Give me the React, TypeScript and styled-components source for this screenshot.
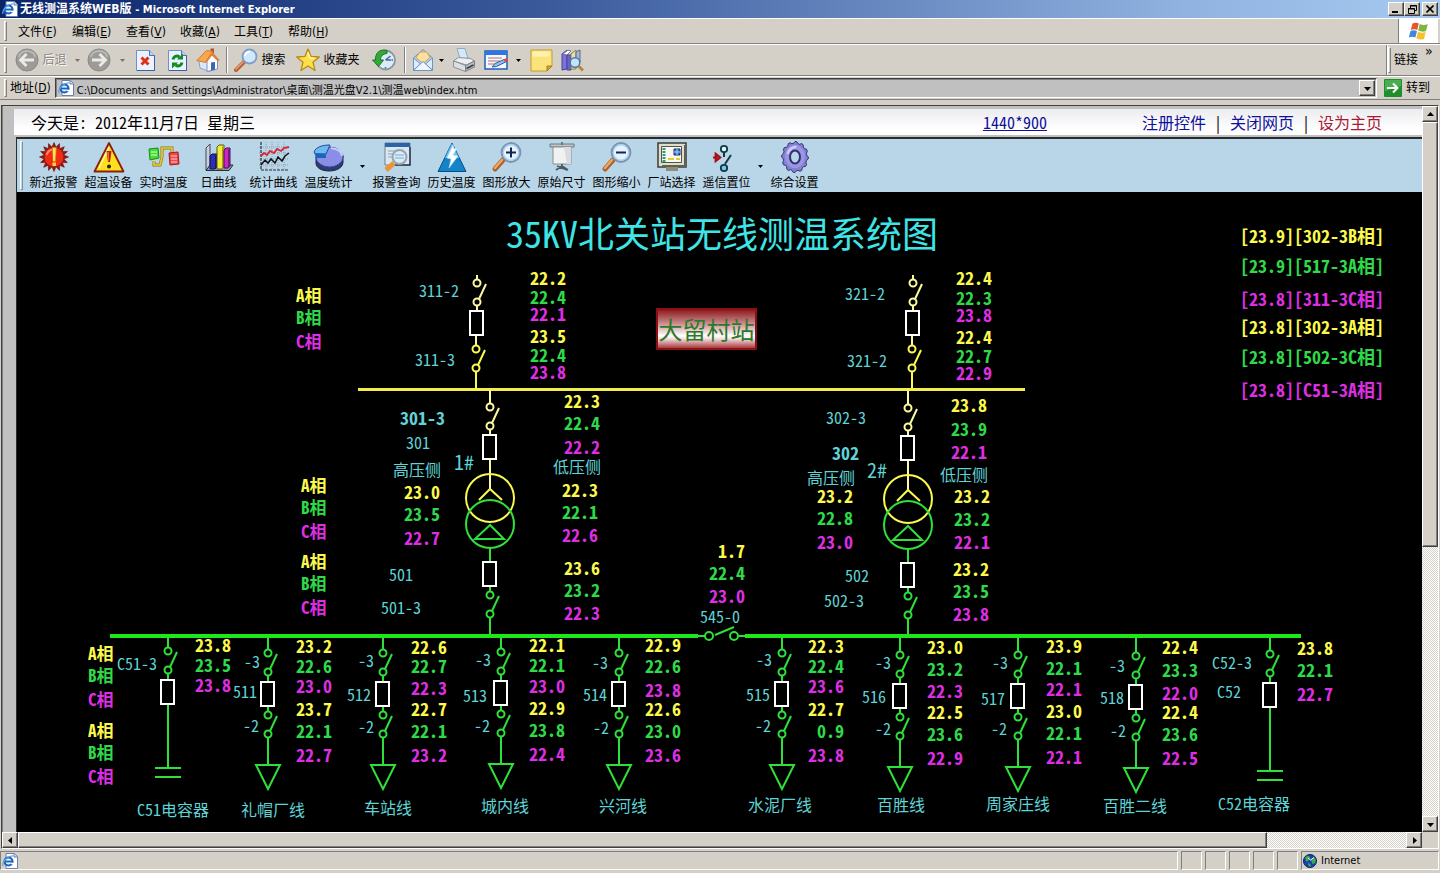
import React from "react";
import styled, { createGlobalStyle, css } from "styled-components";

const GlobalStyle = createGlobalStyle`
  * { box-sizing: border-box; }
  html, body { margin: 0; padding: 0; }
  body { background: #d4d0c8; overflow: hidden; }
  button, input { font: inherit; color: inherit; margin: 0; padding: 0; border: 0; background: none; }
  svg { display: block; flex: none; }
`;

const uiFont = `"DejaVu Sans Condensed", "Noto Sans CJK SC", sans-serif`;
const songFont = `"Noto Sans CJK SC", sans-serif`;

const YELLOW = "#fbf84e";
const GREEN = "#2fd94a";
const MAGENTA = "#dd2fe0";
const CYAN = "#5fd3d6";
const PHASE_COLORS = [YELLOW, GREEN, MAGENTA];

/* ---------- window chrome ---------- */

const Window = styled.div`
  height: 100vh;
  display: flex;
  flex-direction: column;
  background: #d4d0c8;
  font-family: ${uiFont};
  font-size: 12px;
  line-height: 16px;
  color: #000;
`;

const TitleBar = styled.header`
  height: 18px;
  display: flex;
  align-items: center;
  gap: 2px;
  padding: 0 2px 0 2px;
  background: linear-gradient(to right, #0a246a, #3a5a9c 38%, #8fb2e0 82%, #a6caf0);
`;

const WindowTitle = styled.h1`
  flex: 1;
  margin: 0;
  font-size: 12px;
  line-height: 16px;
  font-weight: 700;
  color: #fff;
  white-space: nowrap;
`;

const ProductName = styled.span`
  font-size: 11px;
`;

const raised = css`
  background: #d4d0c8;
  border: 1px solid;
  border-color: #fff #404040 #404040 #fff;
  box-shadow: inset -1px -1px 0 #808080;
`;

const CaptionButton = styled.button<{ $apart?: boolean }>`
  ${raised}
  width: 16px;
  height: 14px;
  margin-left: ${(p) => (p.$apart ? 0 : -2)}px;
  display: flex;
  align-items: center;
  justify-content: center;
`;

const Band = styled.div<{ $h: number }>`
  height: ${(p) => p.$h}px;
  display: flex;
  align-items: center;
  border-top: 1px solid #fff;
  border-bottom: 1px solid #808080;
  padding-left: 4px;
`;

const Grip = styled.span`
  width: 3px;
  align-self: stretch;
  margin: 2px 0;
  border: 1px solid;
  border-color: #fff #808080 #808080 #fff;
`;

const MenuList = styled.nav`
  flex: 1;
  display: flex;
  align-items: center;
  padding-left: 11px;
  padding-top: 2px;
  gap: 14px;
`;

const MenuItem = styled.button`
  width: 40px;
  text-align: left;
  white-space: nowrap;
  font-size: 12px;
  line-height: 16px;
  u { text-underline-offset: 1px; }
`;

const LogoBox = styled.div`
  width: 40px;
  align-self: stretch;
  display: flex;
  align-items: center;
  justify-content: center;
  background: #fff;
  border-left: 1px solid #808080;
  margin-right: 2px;
`;

const ToolRow = styled.div`
  flex: 1;
  display: flex;
  align-items: center;
  padding-left: 4px;
`;

const ToolButton = styled.button<{ $w: number; $muted?: boolean }>`
  width: ${(p) => p.$w}px;
  height: 28px;
  display: flex;
  align-items: center;
  justify-content: center;
  gap: 3px;
  white-space: nowrap;
  color: ${(p) => (p.$muted ? "#8a8780" : "#000")};
  text-shadow: ${(p) => (p.$muted ? "1px 1px 0 #fff" : "none")};
`;

const Divider = styled.span`
  width: 2px;
  height: 26px;
  margin: 0 3px;
  border-left: 1px solid #808080;
  border-right: 1px solid #fff;
`;

const LinksBand = styled.div`
  width: 54px;
  align-self: stretch;
  display: flex;
  gap: 3px;
  border-left: 1px solid #808080;
  box-shadow: inset 1px 0 0 #fff;
  padding-left: 1px;
  white-space: nowrap;
`;

const LinksLabel = styled.span`
  align-self: center;
`;

const Chevron = styled.span`
  padding-left: 4px;
  font-size: 14px;
  line-height: 12px;
`;

const AddressLabel = styled.label`
  padding: 0 4px 0 3px;
  white-space: nowrap;
`;

const AddressBox = styled.div`
  flex: 1;
  height: 20px;
  display: flex;
  align-items: center;
  background: #c0c0c0;
  border: 1px solid;
  border-color: #404040 #fff #fff #404040;
  box-shadow: inset 1px 1px 0 #808080;
  padding: 0 1px 0 2px;
`;

const AddressInput = styled.input`
  flex: 1;
  height: 18px;
  padding-left: 3px;
  padding-top: 2px;
  font-size: 11px;
  outline: none;
`;

const SquareButton = styled.button`
  ${raised}
  width: 16px;
  height: 16px;
  flex: none;
  display: flex;
  align-items: center;
  justify-content: center;
`;

const GoButton = styled.button`
  width: 63px;
  display: flex;
  align-items: center;
  gap: 4px;
  padding-left: 7px;
  white-space: nowrap;
`;

/* ---------- viewport and scroll bars ---------- */

const Viewport = styled.div`
  flex: 1;
  min-height: 0;
  margin: 5px 1px 0 1px;
  border: 1px solid;
  border-color: #404040 #fff #fff #404040;
  display: grid;
  grid-template-columns: minmax(0, 1fr) 16px;
  grid-template-rows: minmax(0, 1fr) 16px;
`;

const dither = css`
  background: repeating-conic-gradient(#fff 0 25%, #d4d0c8 0 50%) 0 0 / 2px 2px;
`;

const VTrack = styled.div`
  ${dither}
  display: flex;
  flex-direction: column;
`;

const HTrack = styled.div`
  ${dither}
  display: flex;
`;

const Thumb = styled.div<{ $share: number }>`
  ${raised}
  flex: ${(p) => p.$share} 1 0;
`;

const Rest = styled.div<{ $share: number }>`
  flex: ${(p) => p.$share} 1 0;
`;

const Page = styled.main`
  min-width: 0;
  display: flex;
  flex-direction: column;
  background: #c0c0c0;
  border-left: 1px solid #808080;
  overflow: hidden;
`;

/* ---------- page header ---------- */

const InfoBar = styled.div`
  height: 26px;
  flex: none;
  margin: 3px 0 2px 11px;
  display: flex;
  align-items: center;
  background: linear-gradient(#ececf0, #fff 80%);
  padding: 0 40px 0 17px;
  font-family: ${songFont};
  font-size: 16px;
  line-height: 20px;
  white-space: pre;
  font-feature-settings: "hwid";
`;

const Today = styled.span`
  flex: 1;
`;

const SizeLink = styled.a`
  color: #10109a;
  margin-right: 95px;
`;

const InfoLink = styled.a<{ $tone: string }>`
  color: ${(p) => p.$tone};
  text-decoration: none;
`;

const Main = styled.section`
  flex: 1;
  min-height: 0;
  display: flex;
  flex-direction: column;
  margin-left: 13px;
  border-top: 2px solid #2c2c2c;
  border-left: 1px solid #2c2c2c;
  background: #000;
`;

const ActionBar = styled.div`
  height: 53px;
  flex: none;
  display: flex;
  align-items: flex-start;
  background: #b9d5e8;
  padding: 2px 0 0 3px;
`;

const ActionGrip = styled.span`
  width: 3px;
  height: 49px;
  margin-right: 3px;
  border: 1px solid;
  border-color: #fff #8094a0 #8094a0 #fff;
`;

const ActionButton = styled.button`
  width: 55px;
  height: 49px;
  display: flex;
  flex-direction: column;
  align-items: center;
  font-family: ${songFont};
  font-size: 12px;
  line-height: 17px;
  white-space: nowrap;
`;

const DropButton = styled.button<{ $w: number; $tall?: boolean }>`
  width: ${(p) => p.$w}px;
  height: ${(p) => (p.$tall ? 50 : 28)}px;
  display: flex;
  align-items: center;
  justify-content: center;
`;

/* ---------- diagram ---------- */

const Canvas = styled.div`
  position: relative;
  flex: 1;
  min-height: 0;
  overflow: hidden;
  background: #000;
  font-family: ${songFont};
  font-feature-settings: "hwid";
`;

const Tag = styled.span<{ $size: number; $bold?: boolean; $color: string; $w?: number }>`
  position: absolute;
  font-size: ${(p) => p.$size}px;
  line-height: ${(p) => (p.$size > 30 ? 40 : 16)}px;
  font-weight: ${(p) => (p.$bold ? 700 : 400)};
  color: ${(p) => p.$color};
  width: ${(p) => (p.$w ? `${p.$w}px` : "auto")};
  text-align: ${(p) => (p.$w ? "right" : "left")};
  white-space: nowrap;
`;

const StationButton = styled.button`
  position: absolute;
  left: 639px;
  top: 116px;
  width: 101px;
  height: 42px;
  border: 2px solid #8e0f12;
  background: linear-gradient(#8e1c20, #c98a8c 35%, #fff 68%, #f2dcdc 76%, #a83a3e);
  color: #2b7a2b;
  font-family: ${songFont};
  font-size: 24px;
  line-height: 36px;
  white-space: nowrap;
`;

/* ---------- status bar ---------- */

const StatusBar = styled.footer`
  height: 24px;
  flex: none;
  display: flex;
  gap: 3px;
  margin-top: 1px;
  padding: 1px 1px 3px 0;
  border-bottom: 1px solid #fff;
`;

const StatusCell = styled.div<{ $w?: number }>`
  ${(p) => (p.$w ? `width: ${p.$w}px;` : "flex: 1;")}
  display: flex;
  align-items: center;
  gap: 4px;
  padding-left: 1px;
  border: 1px solid;
  border-color: #808080 #fff #fff #808080;
  font-size: 11px;
`;

/* ---------- small glyphs ---------- */

const Caret = ({ dir = "down", color = "#000" }: { dir?: "up" | "down" | "left" | "right"; color?: string }) => {
  const d = {
    down: "M0 2h7l-3.5 4z",
    up: "M0 5h7l-3.5-4z",
    left: "M5 0v7L1 3.5z",
    right: "M2 0v7l4-3.5z",
  }[dir];
  return (
    <svg width="7" height="7" viewBox="0 0 7 7" aria-hidden="true">
      <path d={d} fill={color} />
    </svg>
  );
};

const SmallCaret = ({ color = "#000" }: { color?: string }) => (
  <svg width="5" height="3" viewBox="0 0 5 3" aria-hidden="true">
    <path d="M0 0h5L2.500 3z" fill={color} />
  </svg>
);

const PageIcon = () => (
  <svg width="16" height="16" viewBox="0 0 16 16" aria-hidden="true">
    <path d="M4 .5h8.500L15.500 3.500v12H4z" fill="#fff" stroke="#6b7fa8" />
    <path d="M12 .5v3.500h3.500" fill="#cfe0f4" stroke="#6b7fa8" />
    <circle cx="6.500" cy="8.500" r="4" fill="#dff0ff" stroke="#1d62b8" strokeWidth="2.200" />
    <path d="M3 8.500h8" stroke="#1d62b8" strokeWidth="1.800" />
    <path d="M9 10.500h3" stroke="#fff" strokeWidth="1.500" />
    <path d="M1 13C-.5 9 6 2.500 11 3" fill="none" stroke="#5aa5ea" strokeWidth="1.200" />
  </svg>
);

const WindowsFlag = () => (
  <svg width="21" height="19" viewBox="0 0 21 19" aria-hidden="true">
    <path d="M4.500 1.500C7 .2 9 .5 10.800 1.500L9.200 8C7.300 7 5 7 2.800 8z" fill="#e8552a" />
    <path d="M11.800 2c2.500 1.200 5 1.200 8 .2L18 9c-2.700 1-5 .8-7.800-.5z" fill="#7cb83a" />
    <path d="M2.500 9C5 8 7 8.200 9 9.200L7.300 15.500C5 14.500 3 14.500.8 15.500z" fill="#3f86dc" />
    <path d="M10 9.700c2.500 1.200 5 1.400 7.700.4L16 17c-2.500 1-5 .6-7.700-.7z" fill="#f5c22d" />
  </svg>
);

const NavDisc = ({ flip }: { flip?: boolean }) => (
  <svg width="24" height="24" viewBox="0 0 24 24" aria-hidden="true">
    <circle cx="12" cy="12" r="11" fill="#9c9b98" stroke="#8a8986" />
    <path d="M3.500 9A9 9 0 0 1 20.500 9" fill="none" stroke="#b9b8b5" strokeWidth="2" />
    <path
      d={flip ? "M5 12h13M12.500 6l6 6-6 6" : "M19 12H6M11.500 6l-6 6 6 6"}
      fill="none"
      stroke="#eceae6"
      strokeWidth="2.800"
    />
  </svg>
);

const SheetBase = () => (
  <>
    <path d="M1.500 1.500h13l5 5v15h-18z" fill="#eaf3ff" stroke="#6f8fd0" />
    <path d="M14.500 1.500v5h5" fill="#b9d2f5" stroke="#4a6fc0" />
    <path d="M2 21.500h17.500v-15" fill="none" stroke="#3b5fae" />
  </>
);

const StopIcon = () => (
  <svg width="21" height="23" viewBox="0 0 21 23" aria-hidden="true">
    <SheetBase />
    <path d="M6.500 8.500l7 7M13.500 8.500l-7 7" stroke="#e0301a" strokeWidth="3" />
  </svg>
);

const RefreshIcon = () => (
  <svg width="21" height="23" viewBox="0 0 21 23" aria-hidden="true">
    <SheetBase />
    <path d="M6 10.500c.5-3 3.500-4.500 6.500-2.500" fill="none" stroke="#128a22" strokeWidth="3" />
    <path d="M10 10.500h6v-6z" fill="#128a22" />
    <path d="M15 13.500c-.5 3-3.500 4.500-6.500 2.500" fill="none" stroke="#128a22" strokeWidth="3" />
    <path d="M11 13.500H5v6z" fill="#128a22" />
  </svg>
);

const HomeIcon = () => (
  <svg width="24" height="24" viewBox="0 0 24 24" aria-hidden="true">
    <path d="M14.500 .5H18v7h-3.500z" fill="#b5532c" />
    <path d="M3 13l7-8 11 6v10l-8 2.500L4 20z" fill="#dbe8fb" stroke="#8aa0cc" />
    <path d="M11 12.500l5-6 5.500 5.500v9L11 23.500z" fill="#f7faff" stroke="#7a93c8" />
    <path d="M.8 12.500L10.500 2.500l6.500 1-7.500 11z" fill="#f6a850" stroke="#d87a2c" />
    <path d="M16 3.500l7.500 8.500-1.500 1.500-6-6-5.500 7-1.500-.5z" fill="#e08230" />
    <path d="M15 14.500l4-.5v7.500l-4 1z" fill="#3f63ae" />
  </svg>
);

const SearchIcon = () => (
  <svg width="24" height="24" viewBox="0 0 24 24" aria-hidden="true">
    <path d="M2 22l8-8" stroke="#b5623a" strokeWidth="4" strokeLinecap="round" />
    <path d="M2 21l7-7" stroke="#e6a27a" strokeWidth="1.500" strokeLinecap="round" />
    <circle cx="15.500" cy="8.500" r="7" fill="#cfe8fb" stroke="#7d9dc4" strokeWidth="1.800" />
    <path d="M11 8a5 5 0 0 1 5-4.500" fill="none" stroke="#fff" strokeWidth="2" />
  </svg>
);

const StarIcon = () => (
  <svg width="24" height="24" viewBox="0 0 24 24" aria-hidden="true">
    <path
      d="M12 1l3 7.300 8.300.7-6.300 5.300 2 8.200-7-4.500L5 22.500l2-8.200L.7 9l8.300-.7z"
      fill="#fbe04a"
      stroke="#b98a12"
      strokeWidth="1.300"
      strokeLinejoin="round"
    />
    <path d="M12 4.500l1.800 5.300 4.700.7" fill="none" stroke="#fff6b8" strokeWidth="1.500" />
  </svg>
);

const HistoryIcon = () => (
  <svg width="24" height="24" viewBox="0 0 24 24" aria-hidden="true">
    <circle cx="13.500" cy="12" r="9.500" fill="#dcebf7" stroke="#8795a5" strokeWidth="1.800" />
    <path d="M13.500 12l5-4M13.500 12h6M13.500 19v1.500M20 12h1M13.500 4v1.500" stroke="#456a8f" strokeWidth="1.500" />
    <path d="M15 2.500C8 .5 3 5 3.500 12H.5l6 6.500 5-6.500H8.500C8.500 8 11 6 15 5.500z" fill="#35a83c" stroke="#17781f" />
  </svg>
);

const MailIcon = () => (
  <svg width="22" height="24" viewBox="0 0 22 24" aria-hidden="true">
    <path d="M1.500 10L11 1.500 20.500 10v12h-19z" fill="#b4d2f2" stroke="#6f93c2" />
    <path d="M4 9.500L8 4h7l3 5.500-7 6z" fill="#fbe0a0" stroke="#d0a050" />
    <path d="M1.500 10l7 6-7 6zM20.500 10l-7 6 7 6z" fill="#dcecfb" stroke="#6f93c2" />
    <path d="M1.500 22.500l9.500-9 9.500 9z" fill="#eef6ff" stroke="#6f93c2" />
  </svg>
);

const PrinterIcon = () => (
  <svg width="24" height="24" viewBox="0 0 24 24" aria-hidden="true">
    <path d="M5 .5h8l3 10H8z" fill="#d5e8fa" stroke="#8fa9c4" />
    <path d="M1.500 13l5-3.500 12 1 4 2.500-8 4z" fill="#eceef0" stroke="#8c9096" />
    <path d="M1.500 13l12 4.500v6L1.500 19z" fill="#dcdfe3" stroke="#8c9096" />
    <path d="M13.500 17.500l9-4.500v6l-9 4.500z" fill="#b4b9c0" stroke="#7c8188" />
    <path d="M14.500 20.500l7-3.500" stroke="#3a3f46" strokeWidth="1.500" />
  </svg>
);

const EditIcon = () => (
  <svg width="25" height="22" viewBox="0 0 25 22" aria-hidden="true">
    <path d="M1 2h22v18H1z" fill="#f4f9ff" stroke="#1f5cc0" strokeWidth="1.500" />
    <path d="M1 2h22v4H1z" fill="#2a78e0" />
    <path d="M4 9h14M4 12h12M4 15h7" stroke="#c06a6a" />
    <path d="M8 18l3-3.500 9-4 2.500 2-10 5z" fill="#8fc0ee" stroke="#2f5f9c" />
    <path d="M19 10.500l4-1.500 1 2.500-3 1.500z" fill="#e04a3a" />
  </svg>
);

const NoteIcon = () => (
  <svg width="23" height="23" viewBox="0 0 23 23" aria-hidden="true">
    <path d="M1 1h21v16l-5 5H1z" fill="#fbe37c" stroke="#c79a28" />
    <path d="M2.500 2.500h17v5h-17z" fill="#fff2ae" />
    <path d="M22 17h-5v5z" fill="#d5a636" stroke="#a87a18" />
  </svg>
);

const ResearchIcon = () => (
  <svg width="23" height="23" viewBox="0 0 23 23" aria-hidden="true">
    <path d="M1 5l5-4v19l-5 1z" fill="#7a74d8" stroke="#4a4498" />
    <path d="M2 5l5-4 3 1-4 4z" fill="#fff" stroke="#6f78a0" />
    <path d="M6 6h4v15H6z" fill="#6a64c8" stroke="#4a4498" />
    <path d="M10 5l5-4v19h-5z" fill="#e8e0b0" stroke="#8a8048" />
    <path d="M15 3l4-2v12h-4z" fill="#a8b8d0" stroke="#566a8c" />
    <circle cx="14" cy="13.500" r="4.800" fill="#c4e4fb" stroke="#4b77a8" strokeWidth="1.500" />
    <path d="M17.500 17l4.500 4.500" stroke="#b8863a" strokeWidth="3" />
  </svg>
);

const GoIcon = () => (
  <svg width="18" height="18" viewBox="0 0 18 18" aria-hidden="true">
    <rect width="18" height="18" rx="1" fill="#1f8f2c" />
    <path d="M1 1h16v6L1 12z" fill="#49ae50" />
    <path d="M3 9h10M9 4.500L13.500 9 9 13.500" fill="none" stroke="#fff" strokeWidth="2" />
  </svg>
);

const GlobeIcon = () => (
  <svg width="14" height="14" viewBox="0 0 14 14" aria-hidden="true">
    <circle cx="7" cy="7" r="6.500" fill="#1b3fae" stroke="#0c1f5a" />
    <path d="M2 3.500l3-2 2 1.500-1 3-2.500 2zM8 6l3-3 2 3-1 3-2.500 1zM5 9l2.500 1 .5 3-2.500-1z" fill="#38b04a" />
    <path d="M5 4l2.500 2L11 3.500" fill="none" stroke="#fff" />
  </svg>
);

/* ---------- action bar icons, on a shared 32-unit grid ---------- */

const ActionSvg = ({ children }: { children: React.ReactNode }) => (
  <svg width="32" height="32" viewBox="0 0 32 32" aria-hidden="true">
    {children}
  </svg>
);

const spikes = Array.from({ length: 32 }, (_, i) => {
  const r = i % 2 ? 10 : 14.5;
  const a = (i * Math.PI) / 16;
  return `${(16 + r * Math.sin(a)).toFixed(1)},${(16 - r * Math.cos(a)).toFixed(1)}`;
}).join(" ");

const teeth = Array.from({ length: 48 }, (_, i) => {
  const r = i % 4 < 2 ? 15.5 : 13.8;
  const a = (i * Math.PI) / 24;
  return `${(16 + r * 0.86 * Math.sin(a)).toFixed(1)},${(16 - r * Math.cos(a)).toFixed(1)}`;
}).join(" ");

const Lens = ({ sign }: { sign: string }) => (
  <ActionSvg>
    <path d="M4 28l8-9" stroke="#a8602c" strokeWidth="5" strokeLinecap="round" />
    <path d="M4 27l7-8" stroke="#f0a860" strokeWidth="2.500" strokeLinecap="round" />
    <circle cx="20" cy="11.500" r="9.300" fill="#e4f3ff" stroke="#7f93ad" strokeWidth="2.200" />
    <circle cx="20" cy="11.500" r="7.800" fill="none" stroke="#a8d0f2" strokeWidth="1.400" />
    <path d={sign} stroke="#14264a" strokeWidth="2" />
  </ActionSvg>
);

const actionIcons: Record<string, React.ReactNode> = {
  alarm: (
    <ActionSvg>
      <polygon points={spikes} fill="#9c140c" stroke="#5c1008" strokeWidth=".6" />
      <circle cx="16" cy="16" r="9.500" fill="#ee2c16" />
      <path d="M8.500 14a8 8 0 0 1 6-5.500" fill="none" stroke="#ff8a68" strokeWidth="2" />
      <path d="M14.300 6.500h4l-.8 14h-2.400z" fill="#ffd23a" stroke="#d87808" strokeWidth=".6" />
      <path d="M16 7v13" stroke="#fff39a" />
      <rect x="14.500" y="21.500" width="3.500" height="3.500" fill="#ffd23a" />
    </ActionSvg>
  ),
  warn: (
    <ActionSvg>
      <path d="M16 2L30.500 30.500h-29z" fill="#fbe11c" stroke="#8a1c10" strokeWidth="1.800" strokeLinejoin="round" />
      <path d="M16 6L6 27" stroke="#fff7a0" strokeWidth="1.500" />
      <path d="M13.500 10h5l-1.500 11h-2z" fill="#b81c10" />
      <path d="M14 11h2v9h-.8z" fill="#e8683c" />
      <circle cx="16" cy="25.500" r="2" fill="#2a1a10" />
    </ActionSvg>
  ),
  realtime: (
    <ActionSvg>
      <path d="M6 20v4h6l2-8V7h10v5" fill="none" stroke="#8a7a20" strokeWidth="3" />
      <path d="M6 20v4h6l2-8V7h10v5" fill="none" stroke="#f0cc2a" strokeWidth="1.600" />
      <path d="M1 8l9-1 1 10-9 2z" fill="#48dc30" stroke="#1c8c1c" />
      <path d="M3 11h6M3 14h6" stroke="#d8ffd0" />
      <path d="M21 12l9-1 1 12-9 1z" fill="#f04848" stroke="#a01c20" />
      <path d="M23 15h6M23 18h6M23 21h6" stroke="#ffd0d0" />
    </ActionSvg>
  ),
  bars: (
    <ActionSvg>
      <path d="M3 7l4-4v22l-4 4z" fill="#c8d0dc" stroke="#404858" />
      <path d="M3 29.500h23l4-5.500H7z" fill="#8894a8" stroke="#28303c" />
      <path d="M7 15l2-2h5v13l-2 2H7z" fill="#2c2cb8" stroke="#101048" />
      <path d="M12 15l2-2v13l-2 2z" fill="#18186c" />
      <path d="M14 6l2-2h5v22l-2 2h-5z" fill="#f4ec38" stroke="#5c5410" />
      <path d="M19 6l2-2v22l-2 2z" fill="#a89c18" />
      <path d="M21 9l2-2h4v18l-2 2h-4z" fill="#c828c8" stroke="#481048" />
      <path d="M25 9l2-2v18l-2 2z" fill="#781878" />
    </ActionSvg>
  ),
  curves: (
    <ActionSvg>
      <path d="M8 1v27M14 1v27M20 1v27M26 1v27M1 6h30M1 12h30M1 18h30M1 24h30" stroke="#8fa2b0" strokeDasharray="1 1" />
      <path d="M3 1v28h28" fill="none" stroke="#283038" strokeWidth="1.200" strokeDasharray="3 1" />
      <path d="M3 15l3-3 3 2 3-4 4 2 3-4 4 2 3-3 5-1" fill="none" stroke="#d82838" strokeWidth="1.800" />
      <path d="M3 24l4-5 3 3 3-4 4 4 3-6 4 4 3-5 4-3" fill="none" stroke="#101418" strokeWidth="1.500" />
    </ActionSvg>
  ),
  pie: (
    <ActionSvg>
      <path d="M3 16v6c0 5 6 8 13 8s14-3 14-9v-7z" fill="#2c3c70" stroke="#182448" />
      <ellipse cx="16.500" cy="16" rx="13.500" ry="10" fill="#8a8ee6" stroke="#3c48a0" />
      <path d="M18 7c7 1 11 4 11 8" fill="none" stroke="#c8ccff" strokeWidth="2" />
      <path d="M1 11C3 6 9 4 17 4l-4 9H2z" fill="#6cb8f0" stroke="#1c4c98" />
      <path d="M1.500 12L13 13v4L3 17z" fill="#1c64b8" />
    </ActionSvg>
  ),
  query: (
    <ActionSvg>
      <path d="M4 2h25v22H4z" fill="#dce8f0" stroke="#6c8090" />
      <path d="M4 2h25v4H4z" fill="#2c64a8" />
      <path d="M29 6v18H12" fill="none" stroke="#283848" strokeWidth="1.500" />
      <path d="M7 10h14M7 13h8M7 16h6" stroke="#8ca4b8" />
      <path d="M5 29l8-7" stroke="#e8963c" strokeWidth="5" />
      <circle cx="18.500" cy="16" r="7" fill="#d4ecfa" fillOpacity=".9" stroke="#98a4b0" strokeWidth="2" />
      <path d="M14 14h9M14 17h9" stroke="#88a8c8" />
    </ActionSvg>
  ),
  history: (
    <ActionSvg>
      <path d="M16 2L30 30.500H2z" fill="#1484c8" stroke="#0c4c88" />
      <path d="M16 2L9 17l14 0z" fill="#6cc4ec" />
      <path d="M17 4l-6 13 4 1-2 9 9-12-5-1 4-7-3 1z" fill="#fff" stroke="#a8e0f8" strokeWidth=".6" />
    </ActionSvg>
  ),
  screen: (
    <ActionSvg>
      <path d="M4 3h24v3H4z" fill="#c0c4c8" stroke="#70787c" />
      <path d="M7 6h18v17H7z" fill="#f0f2f2" stroke="#888e90" />
      <path d="M18 6h7v17h-4z" fill="#d8dcde" />
      <path d="M16 23v2M10 29l6-4 6 4M11 25l10 4" stroke="#505860" strokeWidth="1.800" fill="none" />
      <path d="M15 1h2v3h-2z" fill="#70787c" />
    </ActionSvg>
  ),
  monitor: (
    <ActionSvg>
      <path d="M2 2h28v24H2z" fill="#e0ddcc" stroke="#3c3c34" strokeWidth="1.500" />
      <path d="M5.500 5.500h20v16h-20z" fill="#f8f8f0" stroke="#54544c" />
      <path d="M8 7v14" stroke="#2c9c7c" strokeWidth="3" strokeDasharray="2 1" />
      <path d="M18 8h6v6h-6z" fill="#3870d0" stroke="#183070" />
      <path d="M18 11h6M21 8v6" stroke="#a8d0f8" />
      <path d="M12 17h6v2h-6zM20 17h4v2h-4z" fill="#e4cc30" />
      <path d="M10 26h12v4H10z" fill="#908c7c" />
      <path d="M29 4v21H6" fill="none" stroke="#606054" strokeWidth="2" />
    </ActionSvg>
  ),
  relay: (
    <ActionSvg>
      <circle cx="13" cy="8" r="3.200" fill="#dff4fa" stroke="#103848" strokeWidth="1.800" />
      <circle cx="13" cy="27" r="3.200" fill="#7cc8e0" stroke="#103848" strokeWidth="1.800" />
      <path d="M13 11v5M20 14l-6 9" stroke="#103848" strokeWidth="2" />
      <path d="M2 16.500h4M4.500 12.500l5 4-5 4z" fill="#d81c24" stroke="#a01018" strokeWidth="1.800" />
    </ActionSvg>
  ),
  gear: (
    <ActionSvg>
      <polygon points={teeth} fill="#8480d0" stroke="#343070" />
      <ellipse cx="16" cy="15.500" rx="10" ry="11.500" fill="#9a96e6" />
      <path d="M8.500 13a8.500 9.500 0 0 1 9-7" fill="none" stroke="#cfccff" strokeWidth="2.500" />
      <ellipse cx="16" cy="16" rx="5" ry="6.500" fill="#b9d5e8" stroke="#343070" strokeWidth="2" />
    </ActionSvg>
  ),
};

const actions: Array<[string, React.ReactNode, boolean?]> = [
  ["新近报警", actionIcons.alarm],
  ["超温设备", actionIcons.warn],
  ["实时温度", actionIcons.realtime],
  ["日曲线", actionIcons.bars],
  ["统计曲线", actionIcons.curves],
  ["温度统计", actionIcons.pie, true],
  ["报警查询", actionIcons.query],
  ["历史温度", actionIcons.history],
  ["图形放大", <Lens key="in" sign="M20 6.500v10M15 11.500h10" />],
  ["原始尺寸", actionIcons.screen],
  ["图形缩小", <Lens key="out" sign="M15 11.500h10" />],
  ["厂站选择", actionIcons.monitor],
  ["遥信置位", actionIcons.relay, true],
  ["综合设置", actionIcons.gear],
];

/* ---------- diagram data ---------- */

/* The plan's coordinates count from this point, the canvas's top left corner. */
const ORIGIN = { x: 17, y: 192 };

type Column = { x: number; ys: number[]; values: string[] };

const col = (x: number, ys: number[], values: string): Column => ({ x, ys, values: values.split(" ") });

const readings: Column[] = [
  col(530, [279, 298, 315, 337, 356, 373], "22.2 22.4 22.1 23.5 22.4 23.8"),
  col(956, [279, 299, 316, 338, 357, 374], "22.4 22.3 23.8 22.4 22.7 22.9"),
  col(564, [402, 424, 448], "22.3 22.4 22.2"),
  col(562, [491, 513, 536], "22.3 22.1 22.6"),
  col(564, [569, 591, 614], "23.6 23.2 22.3"),
  col(404, [493, 515, 539], "23.0 23.5 22.7"),
  col(951, [406, 430, 453], "23.8 23.9 22.1"),
  col(954, [497, 520, 543], "23.2 23.2 22.1"),
  col(953, [570, 592, 615], "23.2 23.5 23.8"),
  col(817, [497, 519, 543], "23.2 22.8 23.0"),
  col(709, [552, 574, 597], "1.7 22.4 23.0"),
  col(195, [646, 666, 686], "23.8 23.5 23.8"),
  col(296, [647, 667, 687, 710, 732, 756], "23.2 22.6 23.0 23.7 22.1 22.7"),
  col(411, [648, 667, 689, 710, 732, 756], "22.6 22.7 22.3 22.7 22.1 23.2"),
  col(529, [646, 666, 687, 709, 731, 755], "22.1 22.1 23.0 22.9 23.8 22.4"),
  col(645, [646, 667, 691, 710, 732, 756], "22.9 22.6 23.8 22.6 23.0 23.6"),
  col(808, [647, 667, 687, 710, 732, 756], "22.3 22.4 23.6 22.7 0.9 23.8"),
  col(927, [648, 670, 692, 713, 735, 759], "23.0 23.2 22.3 22.5 23.6 22.9"),
  col(1046, [647, 669, 690, 712, 734, 758], "23.9 22.1 22.1 23.0 22.1 22.1"),
  col(1162, [648, 671, 694, 713, 735, 759], "22.4 23.3 22.0 22.4 23.6 22.5"),
  col(1297, [649, 671, 695], "23.8 22.1 22.7"),
];

const phases: Column[] = [
  col(296, [297, 319, 343], "A相 B相 C相"),
  col(301, [487, 509, 533], "A相 B相 C相"),
  col(301, [563, 585, 609], "A相 B相 C相"),
  col(88, [655, 677, 701], "A相 B相 C相"),
  col(88, [732, 754, 778], "A相 B相 C相"),
];

const alarms = col(
  1240,
  [237, 267, 300, 328, 358, 391],
  "[23.9][302-3B相] [23.9][517-3A相] [23.8][311-3C相] [23.8][302-3A相] [23.8][502-3C相] [23.8][C51-3A相]"
);

const names: Array<[number, number, string]> = [
  [419, 292, "311-2"], [415, 361, "311-3"], [845, 295, "321-2"], [847, 362, "321-2"],
  [406, 444, "301"], [393, 471, "高压侧"], [553, 468, "低压侧"],
  [826, 419, "302-3"], [807, 479, "高压侧"], [940, 476, "低压侧"],
  [389, 576, "501"], [381, 609, "501-3"], [845, 577, "502"], [824, 602, "502-3"], [700, 618, "545-0"],
  [117, 665, "C51-3"], [244, 663, "-3"], [233, 693, "511"], [243, 727, "-2"],
  [358, 662, "-3"], [347, 696, "512"], [358, 728, "-2"],
  [475, 661, "-3"], [463, 697, "513"], [474, 727, "-2"],
  [592, 664, "-3"], [583, 696, "514"], [593, 729, "-2"],
  [756, 661, "-3"], [746, 696, "515"], [755, 727, "-2"],
  [875, 664, "-3"], [862, 698, "516"], [875, 730, "-2"],
  [992, 664, "-3"], [981, 700, "517"], [991, 730, "-2"],
  [1109, 667, "-3"], [1100, 699, "518"], [1110, 732, "-2"],
  [1212, 664, "C52-3"], [1217, 693, "C52"],
  [137, 811, "C51电容器"], [241, 811, "礼帽厂线"], [364, 809, "车站线"], [481, 807, "城内线"],
  [599, 807, "兴河线"], [748, 806, "水泥厂线"], [877, 806, "百胜线"], [986, 805, "周家庄线"],
  [1103, 807, "百胜二线"], [1218, 805, "C52电容器"],
];

/* Glyphs sit low in their line box, so a tag's box starts `rise` above its centre. */
const at = (x: number, cy: number, rise = 10) => ({ left: x - ORIGIN.x, top: cy - ORIGIN.y - rise });

/* ---------- diagram symbols ---------- */

const Switch = ({ x, y }: { x: number; y: number }) => (
  <g>
    <circle cx={x} cy={y} r="3.500" />
    <circle cx={x} cy={y + 19} r="3.500" />
    <path d={`M${x + 9} ${y + 1}L${x + 2} ${y + 16}`} />
  </g>
);

const Fuse = ({ x, y }: { x: number; y: number }) => (
  <rect x={x - 7} y={y} width="13" height="24" stroke="#fff" />
);

const Incoming = ({ x }: { x: number }) => (
  <g stroke="#fbf8a0">
    <path d={`M${x} 275v4M${x} 306v4M${x - 1} 335v10`} />
    <Switch x={x} y={283} />
    <Fuse x={x} y={311} />
    <g stroke={YELLOW}>
      <Switch x={x - 1} y={349} />
      <path d={`M${x - 1} 372v17`} />
    </g>
  </g>
);

const Transformer = ({ x, dy }: { x: number; dy: number }) => (
  <g transform={`translate(${x} ${dy})`}>
    <g stroke="#fbf8a0">
      <path d="M0 390v13M0 430v4M0 459v30" />
      <Switch x={0} y={407} />
    </g>
    <Fuse x={0} y={435} />
    <g stroke={YELLOW}>
      <circle cx="0" cy="498" r="24" />
      <path d="M-11 500L0 489l12 11" />
    </g>
    <g stroke="#2ee03a">
      <circle cx="0" cy="524" r="24" />
      <path d="M0 525l-15 14h29zM0 548v14M0 586v6M0 618v17" />
      <Switch x={0} y={595} />
    </g>
    <Fuse x={0} y={562} />
  </g>
);

const Feeder = ({ x, dy }: { x: number; dy: number }) => (
  <g>
    <path d={`M${x} 638V${649 + dy}`} />
    <g transform={`translate(${x} ${dy})`}>
      <Switch x={0} y={653} />
      <path d="M0 676v6M0 706v5M0 738v27M-12 765h24L0 789z" />
      <Switch x={0} y={715} />
      <Fuse x={0} y={682} />
    </g>
  </g>
);

const Capacitor = ({ x, dy }: { x: number; dy: number }) => (
  <g>
    <path d={`M${x} 638V${647 + dy}`} />
    <g transform={`translate(${x} ${dy})`}>
      <Switch x={0} y={651} />
      <path d="M0 674v6M0 704v63M-13 768h26M-13 777h26" />
      <Fuse x={0} y={680} />
    </g>
  </g>
);

const feeders: Array<[number, number]> = [
  [268, 0], [383, 0], [501, -1], [619, 0], [782, 0], [900, 2], [1018, 2], [1136, 3],
];

const Wiring = () => (
  <svg
    width="1405"
    height="640"
    viewBox={`${ORIGIN.x} ${ORIGIN.y} 1405 640`}
    fill="none"
    stroke="#2ee03a"
    strokeWidth="2"
    aria-hidden="true"
  >
    <Incoming x={477} />
    <Incoming x={913} />
    <path d="M358 389.500h667" stroke="#f4ee4a" strokeWidth="3" />
    <Transformer x={490} dy={0} />
    <Transformer x={908} dy={1} />
    <path d="M110 636h588M745 636h556" stroke="#1ce81c" strokeWidth="4" />
    <path d="M698 636h7M739 636h7M715 635l19-8" />
    <circle cx="709" cy="636" r="4" />
    <circle cx="734" cy="636" r="4" />
    <Capacitor x={168} dy={0} />
    {feeders.map(([x, dy]) => (
      <Feeder key={x} x={x} dy={dy} />
    ))}
    <Capacitor x={1270} dy={3} />
  </svg>
);

const Diagram = () => (
  <Canvas>
    <Wiring />
    <Tag as="h2" $size={36} $color="#3fe4e6" style={{ ...at(506, 235, 23), margin: 0 }}>
      35KV北关站无线测温系统图
    </Tag>
    <StationButton>大留村站</StationButton>
    {readings.map((c) =>
      c.values.map((v, i) => (
        <Tag key={`${c.x}-${c.ys[i]}`} $size={18} $bold $w={36} $color={PHASE_COLORS[i % 3]} style={at(c.x, c.ys[i])}>
          {v}
        </Tag>
      ))
    )}
    {phases.map((c) =>
      c.values.map((v, i) => (
        <Tag key={`${c.x}-${c.ys[i]}`} $size={17} $bold $color={PHASE_COLORS[i % 3]} style={at(c.x, c.ys[i])}>
          {v}
        </Tag>
      ))
    )}
    {alarms.values.map((v, i) => (
      <Tag key={v} $size={18} $bold $color={PHASE_COLORS[i % 3]} style={at(alarms.x, alarms.ys[i])}>
        {v}
      </Tag>
    ))}
    {names.map(([x, y, text]) => (
      <Tag key={`${x}-${y}`} $size={16} $color={CYAN} style={at(x, y)}>
        {text}
      </Tag>
    ))}
    <Tag $size={18} $bold $color={CYAN} style={at(400, 419)}>301-3</Tag>
    <Tag $size={18} $bold $color={CYAN} style={at(832, 454)}>302</Tag>
    <Tag $size={20} $color={CYAN} style={at(454, 464)}>1#</Tag>
    <Tag $size={20} $color={CYAN} style={at(867, 472)}>2#</Tag>
  </Canvas>
);

/* ---------- assembly ---------- */

const menus: Array<[string, string]> = [
  ["文件", "F"], ["编辑", "E"], ["查看", "V"], ["收藏", "A"], ["工具", "T"], ["帮助", "H"],
];

export default function App() {
  return (
    <Window>
      <GlobalStyle />
      <TitleBar>
        <PageIcon />
        <WindowTitle>
          无线测温系统WEB版 <ProductName>- Microsoft Internet Explorer</ProductName>
        </WindowTitle>
        <CaptionButton aria-label="最小化">
          <svg width="8" height="8" viewBox="0 0 8 8"><path d="M0 6h6v2H0z" /></svg>
        </CaptionButton>
        <CaptionButton aria-label="还原">
          <svg width="9" height="9" viewBox="0 0 9 9" fill="none" stroke="#000">
            <path d="M2.500 3V.5h6v5H7M2 1h7M.5 3.500h6v5h-6zM0 4h7" />
          </svg>
        </CaptionButton>
        <CaptionButton $apart aria-label="关闭">
          <svg width="8" height="8" viewBox="0 0 8 8" stroke="#000" strokeWidth="1.600"><path d="M.5 .5l7 7M7.500 .5l-7 7" /></svg>
        </CaptionButton>
      </TitleBar>

      <Band $h={26}>
        <Grip />
        <MenuList>
          {menus.map(([name, key]) => (
            <MenuItem key={key}>{name}(<u>{key}</u>)</MenuItem>
          ))}
        </MenuList>
        <LogoBox><WindowsFlag /></LogoBox>
      </Band>

      <Band $h={32}>
        <Grip />
        <ToolRow>
          <ToolButton $w={60} $muted><NavDisc />后退</ToolButton>
          <DropButton $w={12} aria-label="后退列表"><SmallCaret color="#77746e" /></DropButton>
          <ToolButton $w={32} aria-label="前进"><NavDisc flip /></ToolButton>
          <DropButton $w={14} aria-label="前进列表"><SmallCaret color="#77746e" /></DropButton>
          <ToolButton $w={32} aria-label="停止"><StopIcon /></ToolButton>
          <ToolButton $w={32} aria-label="刷新"><RefreshIcon /></ToolButton>
          <ToolButton $w={30} aria-label="主页"><HomeIcon /></ToolButton>
          <Divider />
          <ToolButton $w={58}><SearchIcon />搜索</ToolButton>
          <ToolButton $w={78}><StarIcon />收藏夹</ToolButton>
          <ToolButton $w={34} aria-label="历史"><HistoryIcon /></ToolButton>
          <Divider />
          <ToolButton $w={28} aria-label="邮件"><MailIcon /></ToolButton>
          <DropButton $w={8} aria-label="邮件列表"><SmallCaret /></DropButton>
          <ToolButton $w={38} aria-label="打印"><PrinterIcon /></ToolButton>
          <ToolButton $w={26} aria-label="编辑"><EditIcon /></ToolButton>
          <DropButton $w={18} aria-label="编辑列表"><SmallCaret /></DropButton>
          <ToolButton $w={28} aria-label="讨论"><NoteIcon /></ToolButton>
          <ToolButton $w={34} aria-label="信息检索"><ResearchIcon /></ToolButton>
        </ToolRow>
        <LinksBand><Grip /><LinksLabel>链接</LinksLabel><Chevron>»</Chevron></LinksBand>
      </Band>

      <Band $h={24}>
        <Grip />
        <AddressLabel htmlFor="address">地址(<u>D</u>)</AddressLabel>
        <AddressBox>
          <PageIcon />
          <AddressInput
            id="address"
            defaultValue="C:\Documents and Settings\Administrator\桌面\测温光盘V2.1\测温web\index.htm"
          />
          <SquareButton aria-label="展开地址"><Caret /></SquareButton>
        </AddressBox>
        <GoButton><GoIcon />转到</GoButton>
      </Band>

      <Viewport>
        <Page>
          <InfoBar>
            <Today>今天是: 2012年11月7日 星期三</Today>
            <SizeLink href="#size">1440*900</SizeLink>
            <InfoLink href="#plugin" $tone="#10109a">注册控件</InfoLink>
            <span> | </span>
            <InfoLink href="#close" $tone="#10109a">关闭网页</InfoLink>
            <span> | </span>
            <InfoLink href="#home" $tone="#a81830">设为主页</InfoLink>
          </InfoBar>
          <Main>
            <ActionBar>
              <ActionGrip />
              {actions.map(([name, icon, drop]) => (
                <React.Fragment key={name}>
                  <ActionButton>{icon}{name}</ActionButton>
                  {drop && <DropButton $w={13} $tall aria-label={`${name}选项`}><SmallCaret /></DropButton>}
                </React.Fragment>
              ))}
            </ActionBar>
            <Diagram />
          </Main>
        </Page>
        <VTrack>
          <SquareButton aria-label="向上滚动"><Caret dir="up" /></SquareButton>
          <Thumb $share={424} />
          <Rest $share={270} />
          <SquareButton aria-label="向下滚动"><Caret /></SquareButton>
        </VTrack>
        <HTrack>
          <SquareButton aria-label="向左滚动"><Caret dir="left" /></SquareButton>
          <Thumb $share={1249} />
          <Rest $share={139} />
          <SquareButton aria-label="向右滚动"><Caret dir="right" /></SquareButton>
        </HTrack>
      </Viewport>

      <StatusBar>
        <StatusCell><PageIcon /></StatusCell>
        {[0, 1, 2, 3, 4].map((n) => (
          <StatusCell key={n} $w={21} />
        ))}
        <StatusCell $w={138}><GlobeIcon />Internet</StatusCell>
      </StatusBar>
    </Window>
  );
}
